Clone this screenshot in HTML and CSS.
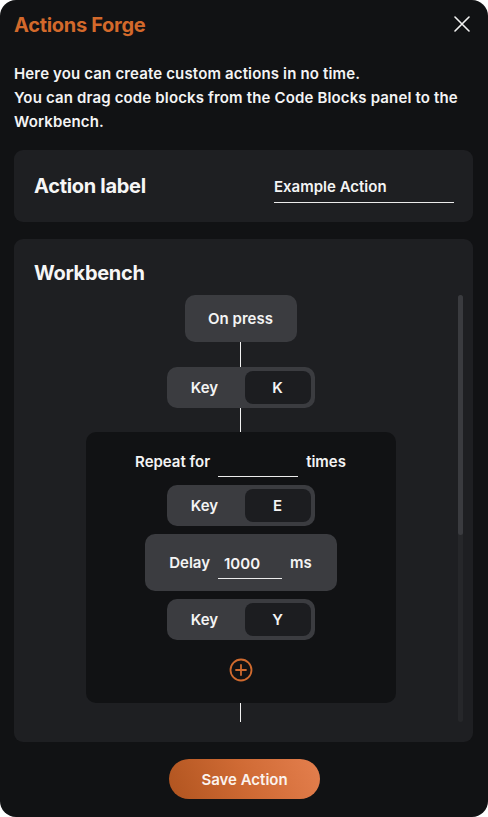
FILE: index.html
```html
<!DOCTYPE html>
<html lang="en">
<head>
<meta charset="utf-8">
<title>Actions Forge</title>
<link rel="stylesheet" href="styles.css">
</head>
<body>
<div class="panel">
  <header class="header">
    <h1 class="title">Actions Forge</h1>
    <button class="close" aria-label="Close">
      <svg width="16" height="16" viewBox="0 0 16 16"><path d="M1 1L15 15M15 1L1 15" stroke="#f2f2f2" stroke-width="1.6" fill="none" stroke-linecap="round"/></svg>
    </button>
  </header>
  <p class="desc">Here you can create custom actions in no time.<br>You can drag code blocks from the Code Blocks panel to the Workbench.</p>

  <section class="card label-card">
    <h2 class="card-title">Action label</h2>
    <input class="text-input label-input" type="text" value="Example Action">
  </section>

  <section class="card bench-card">
    <h2 class="card-title">Workbench</h2>
    <div class="bench">
      <div class="flow">
        <div class="block event">On press</div>
        <div class="link"></div>
        <div class="block key"><span class="key-label">Key</span><span class="key-value">K</span></div>
        <div class="link short"></div>
        <div class="repeat">
          <div class="repeat-row">
            <span>Repeat for</span>
            <input class="text-input small-input" type="text" value="">
            <span>times</span>
          </div>
          <div class="block key"><span class="key-label">Key</span><span class="key-value">E</span></div>
          <div class="block delay">
            <span>Delay</span>
            <input class="text-input delay-input" type="text" value="1000">
            <span>ms</span>
          </div>
          <div class="block key"><span class="key-label">Key</span><span class="key-value">Y</span></div>
          <button class="add" aria-label="Add block">
            <svg width="24" height="24" viewBox="0 0 24 24"><circle cx="12" cy="12" r="10.5" stroke="#d06a2e" stroke-width="1.8" fill="none"/><path d="M12 7v10M7 12h10" stroke="#d06a2e" stroke-width="1.8" stroke-linecap="round"/></svg>
          </button>
        </div>
        <div class="link long"></div>
      </div>
      <div class="scrollbar"><div class="thumb"></div></div>
    </div>
  </section>

  <div class="footer">
    <button class="save">Save Action</button>
  </div>
</div>
</body>
</html>
```

FILE: styles.css
```css
* { box-sizing: border-box; }
html, body { margin: 0; padding: 0; background: #ffffff; }
body {
  font-family: Inter, "Noto Sans", sans-serif;
  color: #f4f4f4;
}
.panel {
  width: 488px;
  height: 817px;
  background: #111214;
  border-radius: 16px;
  padding: 11px 15px 0 14px;
  display: flex;
  flex-direction: column;
  overflow: hidden;
}
.header {
  display: flex;
  align-items: center;
  justify-content: space-between;
  height: 28px;
}
.title {
  margin: 0;
  font-size: 20px;
  line-height: 28px;
  font-weight: 700;
  color: #d3692b;
  letter-spacing: -0.3px;
}
.close {
  background: none;
  border: 0;
  padding: 0;
  width: 16px;
  height: 16px;
  margin-right: 3px;
  margin-top: -2px;
  display: flex;
}
.desc {
  margin: 23px 0 16px;
  font-size: 15px;
  line-height: 24px;
  font-weight: 600;
  letter-spacing: 0.15px;
  color: #f4f4f4;
}
.card {
  background: #1e1f22;
  border-radius: 9px;
}
.card-title {
  margin: 0;
  font-size: 20px;
  line-height: 28px;
  font-weight: 700;
  color: #f6f6f6;
  letter-spacing: -0.3px;
}
.label-card {
  height: 72px;
  padding: 0 19px 0 20px;
  display: flex;
  align-items: center;
  justify-content: space-between;
}
.text-input {
  background: transparent;
  border: 0;
  border-bottom: 1.5px solid #ececec;
  color: #f4f4f4;
  font-family: inherit;
  font-weight: 600;
  font-size: 15px;
  outline: none;
  padding: 0;
}
.label-input {
  width: 180px;
  height: 30px;
  margin-top: 3px;
  padding-bottom: 2px;
}
.bench-card {
  margin-top: 17px;
  height: 503px;
  padding: 20px 10px 20px 20px;
  display: flex;
  flex-direction: column;
}
.bench {
  margin-top: 8px;
  flex: 1;
  display: flex;
  gap: 11px;
  min-height: 0;
}
.flow {
  flex: 1;
  display: flex;
  flex-direction: column;
  align-items: center;
  overflow: hidden;
}
.scrollbar {
  width: 5px;
  background: #26272a;
  border-radius: 3px;
}
.thumb {
  height: 240px;
  background: #3a3b3f;
  border-radius: 3px;
}
.block {
  background: #3b3c40;
  border-radius: 10px;
  font-size: 15px;
  font-weight: 600;
  color: #f4f4f4;
  display: flex;
  align-items: center;
  justify-content: center;
  flex-shrink: 0;
}
.event {
  width: 112px;
  height: 47px;
}
.link {
  width: 1px;
  height: 25px;
  background: #f2f2f2;
  flex-shrink: 0;
}
.link.short { height: 24px; }
.link.long { height: 40px; }
.key {
  width: 148px;
  height: 41px;
  padding: 4px;
  justify-content: flex-start;
}
.key-label {
  width: 74px;
  text-align: center;
  padding-right: 6px;
}
.key-value {
  width: 66px;
  height: 33px;
  background: #1c1d20;
  border-radius: 8px;
  display: flex;
  align-items: center;
  justify-content: center;
}
.repeat {
  width: 310px;
  height: 271px;
  background: #111214;
  border-radius: 10px;
  padding: 14px 0 21px;
  display: flex;
  flex-direction: column;
  align-items: center;
  gap: 8px;
  flex-shrink: 0;
}
.repeat-row {
  display: flex;
  align-items: center;
  gap: 8px;
  height: 31px;
  font-size: 15px;
  font-weight: 600;
}
.small-input {
  width: 80px;
  height: 31px;
}
.delay {
  width: 192px;
  height: 57px;
  gap: 8px;
}
.delay-input {
  width: 64px;
  height: 30px;
  padding-left: 6px;
  margin-top: 2px;
}
.add {
  background: none;
  border: 0;
  padding: 0;
  margin-top: 10px;
  width: 24px;
  height: 24px;
  display: flex;
}
.footer {
  display: flex;
  justify-content: center;
  margin-top: 17px;
}
.save {
  width: 151px;
  height: 40px;
  border: 0;
  border-radius: 20px;
  background: linear-gradient(65deg, #b0541f 0%, #cf6a34 50%, #e47f4e 100%);
  color: #fbf3ee;
  font-family: inherit;
  font-size: 15px;
  font-weight: 600;
  margin-left: 2px;
}
```
